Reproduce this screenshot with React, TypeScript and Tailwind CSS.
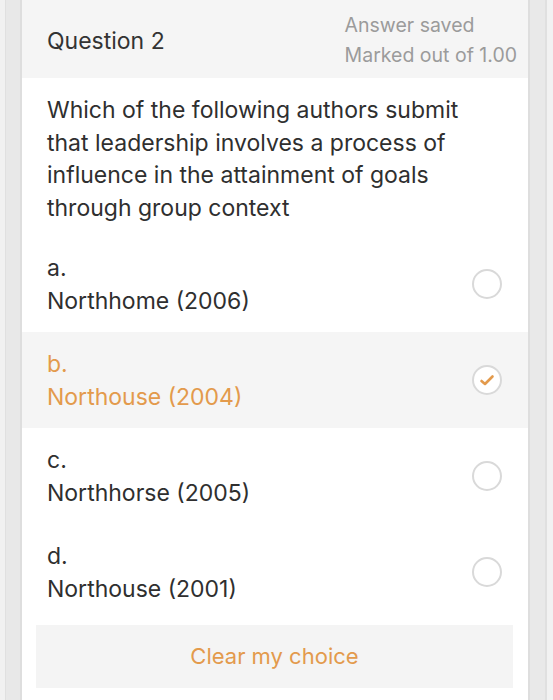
import React, { useState } from 'react';

const options = [
  { letter: 'a.', label: 'Northhome (2006)' },
  { letter: 'b.', label: 'Northouse (2004)' },
  { letter: 'c.', label: 'Northhorse (2005)' },
  { letter: 'd.', label: 'Northouse (2001)' },
];

function Radio({ checked }: { checked: boolean }) {
  return (
    <div className="w-[30px] h-[30px] rounded-full border-2 border-[#d9d9d9] bg-white flex items-center justify-center">
      {checked && (
        <svg width="16" height="14" viewBox="0 0 16 14" fill="none">
          <path d="M2.5 8 L6 11 L13.5 3.5" stroke="#e39a4c" strokeWidth="2.6" strokeLinecap="round" strokeLinejoin="round" />
        </svg>
      )}
    </div>
  );
}

export default function App() {
  const [selected, setSelected] = useState<number | null>(1);

  return (
    <div
      className="w-[553px] h-[700px] overflow-hidden bg-[#f0f0f0] flex"
      style={{ fontFamily: 'Inter, "Liberation Sans", Arial, sans-serif' }}
    >
      {/* left rail */}
      <div className="w-[5px] bg-[#f1f1f1]" />
      <div className="w-[15px] bg-[#e8e8e8] border-l border-[#e0e0e0]" />
      <div className="w-[2px] bg-[#dedede]" />

      {/* card */}
      <div className="w-[506px] bg-white flex flex-col">
        {/* Header */}
        <div className="h-[78px] bg-[#f5f5f5] flex items-center justify-between pl-[25px] pr-[11px]">
          <div className="text-[23px] text-[#333] mt-[4px]">Question 2</div>
          <div className="text-[19.5px] text-[#9b9b9b] leading-[30px] pt-[2px]">
            <div>Answer saved</div>
            <div>Marked out of 1.00</div>
          </div>
        </div>

        {/* Question text */}
        <div className="pl-[25px] pr-[40px] pt-[16px] pb-[12px] text-[23px] leading-[32.5px] text-[#2f2f2f]">
          Which of the following authors submit that leadership involves a process of influence in the
          attainment of goals through group context
        </div>

        {/* Options */}
        <div className="flex flex-col">
          {options.map((o, i) => {
            const active = selected === i;
            return (
              <div
                key={o.letter}
                onClick={() => setSelected(i)}
                className={`h-[96px] flex items-center justify-between pl-[25px] pr-[26px] cursor-pointer ${
                  active ? 'bg-[#f5f5f5] text-[#e39a4c]' : 'text-[#2f2f2f]'
                }`}
              >
                <div className="text-[23px] leading-[33px] pt-[1px]">
                  <div>{o.letter}</div>
                  <div>{o.label}</div>
                </div>
                <Radio checked={active} />
              </div>
            );
          })}
        </div>

        {/* Clear */}
        <div className="pl-[14px] pr-[15px] pt-[5px]">
          <button
            onClick={() => setSelected(null)}
            className="w-full h-[63px] bg-[#f4f4f4] text-[#e39a4c] text-[22px] flex items-center justify-center"
          >
            Clear my choice
          </button>
        </div>
      </div>

      {/* right rail */}
      <div className="w-[2px] bg-[#dedede]" />
      <div className="w-[15px] bg-[#e9e9e9]" />
      <div className="w-[2px] bg-[#e0e0e0]" />
      <div className="flex-1 bg-[#f2f2f2]" />
    </div>
  );
}
